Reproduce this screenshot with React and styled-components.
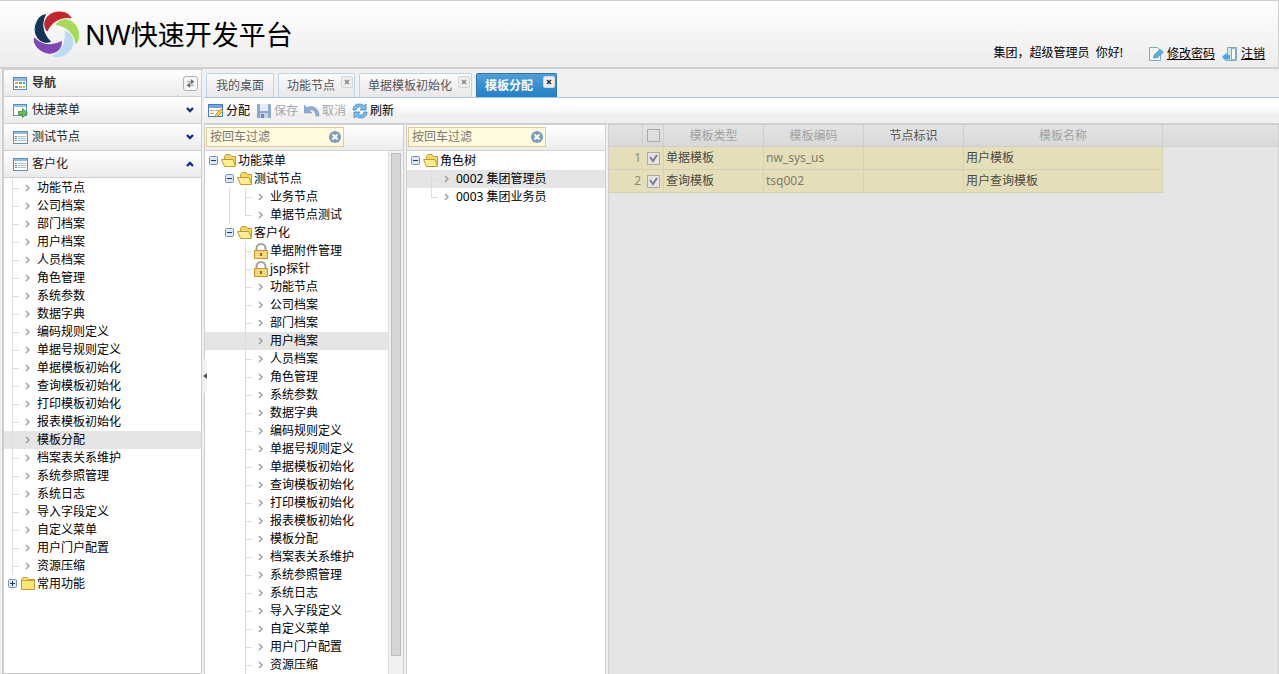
import React from 'react';
import styled, { createGlobalStyle, css } from 'styled-components';

const Global = createGlobalStyle`
  *, *::before, *::after { box-sizing: border-box; }
  html, body { margin: 0; padding: 0; }
  body, button, input, table {
    font-family: "Noto Sans", "Noto Sans CJK SC", sans-serif;
    font-size: 12px;
    line-height: 18px;
    color: #000;
  }
  button { border: 0; padding: 0; background: none; cursor: pointer; }
  ul { list-style: none; margin: 0; padding: 0; }
  svg { display: block; flex: none; }
`;

/* ---------- icons ---------- */

const Icon = ({ size = 16, children, ...rest }) => (
  <svg width={size} height={size} viewBox="0 0 16 16" aria-hidden="true" {...rest}>{children}</svg>
);

const Logo = () => {
  const petal = 'M-9,-3 C-15,-12 -8,-22 3,-22 C9,-22 13,-20 15,-16 C6,-18 -4,-13 -9,-3 Z';
  const colors = ['#c4242b', '#a5dc57', '#b9dcf3', '#7f45b5', '#0f3557'];
  return (
    <svg width="46" height="46" viewBox="-23 -23 46 46" aria-hidden="true">
      {colors.map((c, i) => (
        <path key={c} d={petal} fill={c} stroke={c} strokeWidth="1" strokeLinejoin="round" transform={`rotate(${i * 72})`} />
      ))}
    </svg>
  );
};

const GridIcon = () => (
  <Icon>
    <rect x="1.5" y="2.5" width="13" height="12" fill="#fff" stroke="#4f8fc9" />
    <rect x="2" y="3" width="12" height="3" fill="#8fbbe6" />
    <rect x="3" y="7" width="3" height="2" fill="#e5a54b" />
    <rect x="7" y="7" width="3" height="2" fill="#6fa84f" />
    <rect x="11" y="7" width="2" height="2" fill="#5c93d0" />
    <rect x="3" y="11" width="3" height="2" fill="#5c93d0" />
    <rect x="7" y="11" width="3" height="2" fill="#e5a54b" />
    <rect x="11" y="11" width="2" height="2" fill="#d9b64b" />
  </Icon>
);
const WindowGoIcon = () => (
  <Icon>
    <rect x="1.5" y="2.5" width="13" height="11" fill="#fff" stroke="#4f8fc9" />
    <rect x="2" y="3" width="12" height="2" fill="#9cc3ea" />
    <path d="M6.5 9.5h4v-3l5 4.5-5 4.5v-3h-4z" fill="#6cbf4b" stroke="#3d8a2e" strokeWidth=".8" />
  </Icon>
);
const ListIcon = () => (
  <Icon>
    <rect x="1.5" y="2.5" width="14" height="12" fill="#fff" stroke="#5b8fc4" />
    <rect x="2" y="3" width="13" height="2" fill="#8fbbe6" />
    <path d="M3 7.5h2M3 9.5h2M3 11.5h2" stroke="#5b8fc4" />
    <path d="M6 7.5h8M6 9.5h8M6 11.5h8" stroke="#b5bdc6" />
  </Icon>
);
const AssignIcon = () => (
  <Icon>
    <rect x=".5" y="1.5" width="14" height="12" fill="#fff" stroke="#3f7bd0" />
    <rect x="1" y="2" width="13" height="3" fill="#6fa3ea" />
    <path d="M2 7.5h4M2 10.5h4M7 7.5h5" stroke="#d59a5a" />
    <path d="M7 14l1-3 5-5 2 2-5 5z" fill="#f6d04c" stroke="#b98218" strokeWidth=".8" />
  </Icon>
);
const SaveIcon = () => (
  <Icon>
    <path d="M1 1h13l1 1v13H1z" fill="#8ea9d1" />
    <rect x="4" y="1" width="8" height="7" fill="#e3ebf6" />
    <rect x="4" y="10" width="8" height="5" fill="#c6d3e6" />
    <rect x="5" y="11" width="3" height="4" fill="#6d8bb9" />
  </Icon>
);
const UndoIcon = () => (
  <Icon>
    <path d="M0 2v8h8L5.500 7.500C8 6 11 7 12 13h3C15.500 6 9 1.500 3 4.500z" fill="#8fabd0" stroke="#7d9cc6" strokeWidth=".6" />
  </Icon>
);
const RefreshIcon = () => (
  <Icon>
    <path d="M1 7C1 3 4 1 7.500 1c2 0 3.500.700 4.500 1.800L14 1v6H8l2-2C8 3 4.500 3.800 4 7z" fill="#7cbcec" stroke="#2d7fca" strokeWidth=".7" />
    <path d="M15 9c0 4-3 6-6.500 6-2 0-3.500-.700-4.500-1.800L2 15V9h6l-2 2c2 2 5.500 1.200 6-2z" fill="#7cbcec" stroke="#2d7fca" strokeWidth=".7" />
  </Icon>
);
const FolderIcon = ({ open }) => (
  <Icon>
    {open ? (
      <>
        <path d="M3.500 12V3.500l1.500-2h4l1.500 2h4V12z" fill="#f6d75f" stroke="#c09a35" />
        <path d="M3.500 13.500L.500 6.500h11.500l2.500 7z" fill="#fdee8f" stroke="#c09a35" strokeLinejoin="round" />
      </>
    ) : (
      <>
        <path d="M1.500 12.500v-9l1.500-2h4l1.500 2h6v9z" fill="#f9dc6a" stroke="#c09a35" />
        <path d="M1.500 4.500h13v9h-13z" fill="#fce873" stroke="#c09a35" strokeLinejoin="round" />
      </>
    )}
  </Icon>
);
const LockIcon = () => (
  <Icon>
    <path d="M3.500 9V5.500a4.500 4.500 0 0 1 9 0V9" fill="none" stroke="#9aa3ad" strokeWidth="2" />
    <rect x="1.500" y="7.500" width="13" height="8" fill="#f9cf68" stroke="#d6982c" />
    <path d="M3 9.500h10M3 11.500h10M3 13.500h10" stroke="#fbe29a" />
    <rect x="7" y="10" width="2" height="3" fill="#9a6510" />
  </Icon>
);
const LeafArrow = () => (
  <Icon><path d="M6 5l3 3-3 3" fill="none" stroke="#9b9b9b" strokeWidth="1.400" /></Icon>
);
const BoxIcon = ({ open }) => (
  <Icon>
    <rect x="4.500" y="3.500" width="8" height="8" rx="1" fill="#dce8f8" stroke="#7592b8" />
    <path d={open ? 'M6 7.500h5' : 'M6 7.500h5M8.500 5v5'} stroke="#16397a" />
  </Icon>
);
const ClearIcon = () => (
  <Icon>
    <circle cx="8" cy="8" r="6" fill="#7b9cc0" />
    <path d="M5.500 5.500l5 5M10.500 5.500l-5 5" stroke="#fff" strokeWidth="2" />
  </Icon>
);
const EditIcon = () => (
  <Icon>
    <path d="M1.500 1.500h8l3 3v10h-11z" fill="#f3f9fb" stroke="#7fa9b7" />
    <path d="M5.500 12l1-3.500L12 3.500l3.500 2.500L9.500 11.500z" fill="#5cb0e6" stroke="#2f80b8" strokeWidth=".6" />
  </Icon>
);
const ExitIcon = () => (
  <Icon>
    <path d="M5.500 1.500h9v13h-9z" fill="#d6e6ea" stroke="#7fa9b7" />
    <path d="M9.500 2v12l4-1V3z" fill="#fff" stroke="#7fa9b7" />
    <path d="M0 11L4.500 6.500V9H8v4H4.500v2.500z" fill="#3fa9ea" />
  </Icon>
);
const SwapIcon = () => (
  <Icon size={11}>
    <path d="M3 5.500h7M9 2.500l4 3-4 3zM13 10.500H6M7 7.500l-4 3 4 3z" fill="#666" stroke="#666" strokeWidth="1" />
  </Icon>
);
const Chevron = ({ up }) => (
  <svg width="10" height="6" viewBox="0 0 10 6" aria-hidden="true">
    <path d={up ? 'M2 5l3-3 3 3' : 'M2 1l3 3 3-3'} fill="none" stroke="#0c2f85" strokeWidth="2.400" />
  </svg>
);
const CloseMark = () => (
  <svg width="6" height="6" viewBox="0 0 6 6" aria-hidden="true">
    <path d="M1 1l4 4M5 1l-4 4" stroke="currentColor" strokeWidth="1.600" />
  </svg>
);

/* ---------- shell ---------- */

const Page = styled.div`
  display: flex;
  flex-direction: column;
  height: 100vh;
  overflow: hidden;
  background: #f0f0f0;
`;

const Header = styled.header`
  flex: none;
  display: flex;
  align-items: center;
  height: 69px;
  padding: 0 13px 0 33px;
  border: solid #d0d0d0;
  border-width: 1px 1px 2px 0;
  background: linear-gradient(#fff, #ececec);
`;
const Title = styled.h1`
  flex: 1;
  margin: 0;
  padding: 2px 0 0 6px;
  font-size: 27px;
  font-weight: 400;
  line-height: 40px;
`;
const UserBar = styled.div`
  align-self: flex-end;
  display: flex;
  align-items: center;
  gap: 7px;
  padding-bottom: 3px;
`;
const Greeting = styled.span`
  margin-right: 18px;
  padding-bottom: 2px;
`;
const UserLink = styled.a`
  display: flex;
  align-items: center;
  gap: 3px;
  color: #000;
  text-decoration: underline;
`;

const Body = styled.div`
  flex: 1;
  min-height: 0;
  display: flex;
  gap: 2px;
`;

/* ---------- sidebar ---------- */

const Sidebar = styled.nav`
  flex: none;
  width: 200px;
  margin-left: 2px;
  display: flex;
  flex-direction: column;
  border: solid #cfcfcf;
  border-width: 1px 1px 1px 2px;
  background: #fff;
`;
const headerLook = css`
  display: flex;
  align-items: center;
  gap: 4px;
  width: 100%;
  height: 27px;
  padding: 0 6px 0 8px;
  border-bottom: 1px solid #cfcfcf;
  background: linear-gradient(#fff, #ebebeb);
  text-align: left;
`;
const SideTitle = styled.div`
  ${headerLook}
  padding-right: 3px;
  font-weight: 700;
  color: #333;
`;
const SideSection = styled.button`
  ${headerLook}
  color: #222;
`;
const Grow = styled.span`
  flex: 1;
`;
const SwapButton = styled.button`
  display: grid;
  place-items: center;
  width: 15px;
  height: 15px;
  border: 1px solid #b0b0b0;
  border-radius: 3px;
  background: #f7f7f7;
`;

/* ---------- tree ---------- */

const TreeList = styled.ul`
  flex: 1;
  min-width: 0;
  padding-top: 1px;
  overflow: hidden;
`;
const TreeRow = styled.li`
  display: flex;
  align-items: center;
  height: 18px;
  white-space: nowrap;
  background: ${p => (p.$active ? '#e5e5e5' : 'transparent')};
`;
const Guide = styled.span`
  flex: none;
  width: 16px;
  height: 18px;
  background-repeat: no-repeat;
  background-image:
    linear-gradient(${p => (p.$line ? '#dedede, #dedede' : 'transparent, transparent')}),
    linear-gradient(${p => (p.$tee ? '#dedede, #dedede' : 'transparent, transparent')});
  background-size: 1px ${p => (p.$end ? '9px' : '18px')}, 7px 1px;
  background-position: 8px 0, 8px 9px;
`;
const Toggle = styled.button`
  flex: none;
  width: 16px;
  height: 16px;
`;
const NodeLink = styled.a`
  margin-left: 1px;
  color: #000;
  text-decoration: none;
`;

/* guides: '|' continuing line, 'T' branch, 'L' last branch, ' ' blank */
const Node = ({ node }) => {
  const { text, kind = 'leaf', guides = '', active } = node;
  return (
    <TreeRow $active={active}>
      {guides.split('').map((g, i) => (
        <Guide key={i} $line={g !== ' '} $tee={g === 'T' || g === 'L'} $end={g === 'L'} />
      ))}
      {(kind === 'open' || kind === 'closed') && (
        <Toggle type="button" aria-label={text}><BoxIcon open={kind === 'open'} /></Toggle>
      )}
      {kind === 'leaf' && <LeafArrow />}
      {kind === 'lock' && <LockIcon />}
      {(kind === 'open' || kind === 'closed') && <FolderIcon open={kind === 'open'} />}
      <NodeLink href="#">{text}</NodeLink>
    </TreeRow>
  );
};
const Tree = ({ nodes }) => (
  <TreeList>{nodes.map((n, i) => <Node key={i} node={n} />)}</TreeList>
);

const archive = [
  '功能节点', '公司档案', '部门档案', '用户档案', '人员档案', '角色管理', '系统参数', '数据字典',
  '编码规则定义', '单据号规则定义', '单据模板初始化', '查询模板初始化', '打印模板初始化',
  '报表模板初始化', '模板分配', '档案表关系维护', '系统参照管理', '系统日志', '导入字段定义',
  '自定义菜单', '用户门户配置', '资源压缩',
];
const sideNodes = [
  ...archive.map(text => ({ text, guides: 'T', active: text === '模板分配' })),
  { text: '常用功能', kind: 'closed' },
];
const menuNodes = [
  { text: '功能菜单', kind: 'open' },
  { text: '测试节点', kind: 'open', guides: ' ' },
  { text: '业务节点', guides: ' |T' },
  { text: '单据节点测试', guides: ' |L' },
  { text: '客户化', kind: 'open', guides: ' ' },
  { text: '单据附件管理', kind: 'lock', guides: '  T' },
  { text: 'jsp探针', kind: 'lock', guides: '  T' },
  ...archive.map(text => ({ text, guides: '  T', active: text === '用户档案' })),
];
const roleNodes = [
  { text: '角色树', kind: 'open' },
  { text: '0002 集团管理员', guides: ' T', active: true },
  { text: '0003 集团业务员', guides: ' L' },
];

/* ---------- main ---------- */

const Main = styled.main`
  position: relative;
  flex: 1;
  min-width: 0;
  display: flex;
  flex-direction: column;
`;
const Tabs = styled.div`
  flex: none;
  display: flex;
  align-items: flex-end;
  gap: 4px;
  height: 29px;
  padding-left: 2px;
  border-bottom: 1px solid #a3c9e6;
`;
const Tab = styled.div`
  display: flex;
  height: 24px;
  padding: 2px ${p => (p.$closable ? 1 : 9)}px 0 ${p => (p.$closable ? 8 : 9)}px;
  border: 1px solid ${p => (p.$active ? '#2a76b5' : '#b9d5ea')};
  border-bottom: 0;
  border-radius: 2px 2px 0 0;
  background: ${p => (p.$active ? 'linear-gradient(#4f9fd8, #2380c8)' : 'linear-gradient(#fbfbfb, #e8e8e8)')};
`;
const TabButton = styled.button`
  height: 20px;
  color: ${p => (p.$active ? '#fff' : '#555')};
  font-weight: ${p => (p.$active ? 700 : 400)};
`;
const TabClose = styled.button`
  display: grid;
  place-items: center;
  width: 12px;
  height: 12px;
  margin-left: ${p => (p.$active ? 10 : 6)}px;
  border: 1px solid #d5d5d5;
  border-radius: 2px;
  background: #eee;
  color: ${p => (p.$active ? '#333' : '#888')};
`;
const Toolbar = styled.div`
  flex: none;
  display: flex;
  align-items: center;
  gap: 6px;
  height: 26px;
  padding-left: 4px;
  border-bottom: 1px solid #cfcfcf;
  background: linear-gradient(#fff, #fff 30%, #f0f0f0 70%);
`;
const ToolButton = styled.button`
  display: flex;
  align-items: center;
  gap: 2px;
  &:disabled { color: #a5a5a5; }
`;
const Panels = styled.div`
  flex: 1;
  min-height: 0;
  display: flex;
  gap: 2px;
`;
const Panel = styled.section`
  flex: none;
  width: 200px;
  display: flex;
  flex-direction: column;
  border: solid #cfcfcf;
  border-width: 1px 1px 0;
  background: #fff;
`;
const FilterBar = styled.div`
  flex: none;
  height: 26px;
  padding: 2px 0 0 1px;
  border-bottom: 1px solid #d5d5d5;
  background: linear-gradient(#fff, #ececec);
`;
const Filter = styled.label`
  display: flex;
  align-items: center;
  width: 138px;
  height: 20px;
  border: 1px solid #ecc98a;
  background: #fffbdc;
`;
const FilterInput = styled.input`
  flex: 1;
  min-width: 0;
  height: 18px;
  padding: 0 0 0 3px;
  border: 0;
  outline: 0;
  background: none;
  &::placeholder { color: #777; opacity: 1; }
`;
const PanelBody = styled.div`
  flex: 1;
  min-height: 0;
  display: flex;
`;
const Scroll = styled.div`
  flex: none;
  width: 15px;
  padding: 2px;
  border-left: 1px solid #dcdcdc;
  background: #f1f1f1;
`;
const Thumb = styled.div`
  height: 97%;
  border: 1px solid #bdbdbd;
  background: #d6d6d6;
`;
const Splitter = styled.button`
  position: absolute;
  left: -1px;
  top: 48%;
  width: 4px;
  height: 34px;
  background: #f0f0f0;
`;

/* ---------- grid ---------- */

const GridPanel = styled.section`
  flex: 1;
  min-width: 0;
  border: solid #cfcfcf;
  border-width: 1px 1px 0;
  background: #e5e5e5;
`;
const Table = styled.table`
  width: 100%;
  table-layout: fixed;
  border-collapse: separate;
  border-spacing: 0;
`;
const Th = styled.th`
  width: ${p => (p.$w ? `${p.$w}px` : 'auto')};
  height: 22px;
  padding: 0;
  border-right: ${p => (p.$w ? '1px solid #cecece' : '0')};
  border-bottom: 1px solid #cecece;
  background: linear-gradient(#e3e3e3, #d9d9d9);
  color: ${p => (p.$strong ? '#555' : '#a2a2a2')};
  font-weight: 400;
`;
const Td = styled.td`
  height: 23px;
  padding: 0 2px;
  border-right: 1px solid #d8d2b4;
  border-bottom: 1px solid #d3cfbc;
  background: #e5dfb9;
  color: ${p => (p.$dim ? '#7c7a6d' : '#4a4a45')};
  text-align: ${p => p.$align || 'left'};
`;
const RowNumber = styled(Td)`
  border-right: 0;
  color: #8d8970;
`;
const Check = styled.input`
  appearance: none;
  display: block;
  width: 13px;
  height: 13px;
  margin: 0 auto;
  border: 1px solid #a9a9a9;
  background: #dedede;
  &:checked {
    background: #e6e4e0 url("data:image/svg+xml,%3Csvg xmlns='http://www.w3.org/2000/svg' viewBox='0 0 11 11'%3E%3Cpath d='M2 4l3 4 4-6' fill='none' stroke='%237f7a9c' stroke-width='2'/%3E%3C/svg%3E");
  }
`;

const tabs = [
  { text: '我的桌面' },
  { text: '功能节点', closable: true },
  { text: '单据模板初始化', closable: true },
  { text: '模板分配', closable: true, active: true },
];
const rows = [
  ['单据模板', 'nw_sys_us', '', '用户模板'],
  ['查询模板', 'tsq002', '', '用户查询模板'],
];

const FilterBox = () => (
  <FilterBar>
    <Filter>
      <FilterInput type="text" placeholder="按回车过滤" aria-label="按回车过滤" />
      <button type="button" aria-label="清除"><ClearIcon /></button>
    </Filter>
  </FilterBar>
);

export default function App() {
  return (
    <Page>
      <Global />
      <Header>
        <Logo />
        <Title>NW快速开发平台</Title>
        <UserBar>
          <Greeting>集团，超级管理员&nbsp; 你好!</Greeting>
          <UserLink href="#"><EditIcon />修改密码</UserLink>
          <UserLink href="#"><ExitIcon />注销</UserLink>
        </UserBar>
      </Header>
      <Body>
        <Sidebar>
          <SideTitle>
            <GridIcon />导航<Grow />
            <SwapButton type="button" aria-label="切换"><SwapIcon /></SwapButton>
          </SideTitle>
          <SideSection type="button"><WindowGoIcon />快捷菜单<Grow /><Chevron /></SideSection>
          <SideSection type="button"><ListIcon />测试节点<Grow /><Chevron /></SideSection>
          <SideSection type="button"><ListIcon />客户化<Grow /><Chevron up /></SideSection>
          <Tree nodes={sideNodes} />
        </Sidebar>
        <Main>
          <Tabs>
            {tabs.map(t => (
              <Tab key={t.text} $active={t.active} $closable={t.closable}>
                <TabButton type="button" $active={t.active}>{t.text}</TabButton>
                {t.closable && <TabClose type="button" $active={t.active} aria-label="关闭"><CloseMark /></TabClose>}
              </Tab>
            ))}
          </Tabs>
          <Toolbar>
            <ToolButton type="button"><AssignIcon />分配</ToolButton>
            <ToolButton type="button" disabled><SaveIcon />保存</ToolButton>
            <ToolButton type="button" disabled><UndoIcon />取消</ToolButton>
            <ToolButton type="button"><RefreshIcon />刷新</ToolButton>
          </Toolbar>
          <Panels>
            <Panel>
              <FilterBox />
              <PanelBody>
                <Tree nodes={menuNodes} />
                <Scroll><Thumb /></Scroll>
              </PanelBody>
            </Panel>
            <Panel>
              <FilterBox />
              <PanelBody><Tree nodes={roleNodes} /></PanelBody>
            </Panel>
            <GridPanel>
              <Table>
                <thead>
                  <tr>
                    <Th $w={34} aria-label="序号" />
                    <Th $w={21}><Check type="checkbox" aria-label="全选" disabled /></Th>
                    <Th $w={100}>模板类型</Th>
                    <Th $w={100}>模板编码</Th>
                    <Th $w={100} $strong>节点标识</Th>
                    <Th $w={199}>模板名称</Th>
                    <Th />
                  </tr>
                </thead>
                <tbody>
                  {rows.map((r, i) => (
                    <tr key={r[1]}>
                      <RowNumber $align="right">{i + 1}</RowNumber>
                      <Td><Check type="checkbox" aria-label={r[0]} defaultChecked disabled /></Td>
                      <Td>{r[0]}</Td>
                      <Td $dim>{r[1]}</Td>
                      <Td>{r[2]}</Td>
                      <Td>{r[3]}</Td>
                    </tr>
                  ))}
                </tbody>
              </Table>
            </GridPanel>
          </Panels>
          <Splitter type="button" aria-label="收起">
            <svg width="4" height="6" viewBox="0 0 4 6" aria-hidden="true"><path d="M4 0v6L0 3z" fill="#555" /></svg>
          </Splitter>
        </Main>
      </Body>
    </Page>
  );
}
